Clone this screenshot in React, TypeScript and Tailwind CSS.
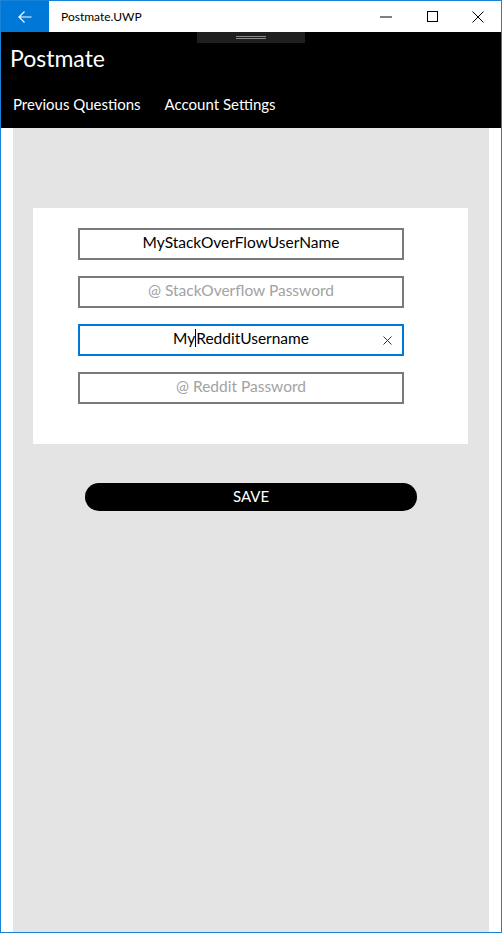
import React from "react";

const font = { fontFamily: '"Segoe UI", Lato, "Noto Sans", sans-serif' };

function TitleBar() {
  return (
    <div className="flex h-[31px] items-stretch bg-white">
      <div className="flex w-[48px] items-center justify-center bg-[#0078d7]">
        <svg width="14" height="12" viewBox="0 0 14 12" fill="none" stroke="white" strokeWidth="1.2">
          <path d="M13.5 6H1M6.5 0.5L1 6l5.5 5.5" />
        </svg>
      </div>
      <div className="flex flex-1 items-center pl-[12px] text-[12px] text-black">Postmate.UWP</div>
      <div className="flex w-[46px] items-center justify-center">
        <svg width="12" height="2" viewBox="0 0 12 2">
          <path d="M0 1h12" stroke="black" strokeWidth="1" />
        </svg>
      </div>
      <div className="flex w-[46px] items-center justify-center">
        <svg width="11" height="11" viewBox="0 0 11 11" fill="none">
          <rect x="0.5" y="0.5" width="10" height="10" stroke="black" strokeWidth="1" />
        </svg>
      </div>
      <div className="flex w-[46px] items-center justify-center">
        <svg width="12" height="12" viewBox="0 0 12 12" fill="none" stroke="black" strokeWidth="1">
          <path d="M0.5 0.5l11 11M11.5 0.5l-11 11" />
        </svg>
      </div>
    </div>
  );
}

function Header() {
  return (
    <header className="relative flex h-[96px] flex-col bg-black text-white">
      <div className="absolute left-[196px] top-0 flex h-[11px] w-[108px] flex-col items-center justify-center gap-[1px] bg-[#1f1f1f]">
        <div className="h-px w-[30px] bg-[#8a8a8a]" />
        <div className="h-px w-[30px] bg-[#8a8a8a]" />
      </div>
      <h1 className="pl-[9px] pt-[10px] text-[23px] leading-[32px] font-normal">Postmate</h1>
      <nav className="flex gap-[24px] pl-[12px] pt-[20px] text-[15px] leading-[20px]">
        <span>Previous Questions</span>
        <span>Account Settings</span>
      </nav>
    </header>
  );
}

interface FieldProps {
  value?: string;
  placeholder?: string;
  focused?: boolean;
}

function Field({ value, placeholder, focused }: FieldProps) {
  return (
    <div
      className={
        focused
          ? "relative flex h-[32px] w-[326px] items-center justify-center border-2 border-[#0078d7] bg-white pb-[2px] text-[15.5px]"
          : "relative flex h-[32px] w-[326px] items-center justify-center border-2 border-[#7a7a7a] bg-white pb-[2px] text-[15.5px]"
      }
    >
      {value ? (
        focused ? (
          <span className="text-black">
            My
            <span className="inline-block h-[18px] w-px bg-black align-[-3px]" />
            RedditUsername
          </span>
        ) : (
          <span className="text-black">{value}</span>
        )
      ) : (
        <span className="text-[#a2a2a2]">{placeholder}</span>
      )}
      {focused && (
        <svg
          className="absolute right-[10px] top-[10px]"
          width="9"
          height="9"
          viewBox="0 0 9 9"
          fill="none"
          stroke="#333"
          strokeWidth="1"
        >
          <path d="M0.5 0.5l8 8M8.5 0.5l-8 8" />
        </svg>
      )}
    </div>
  );
}

export default function App() {
  return (
    <div
      className="flex h-[933px] w-[502px] flex-col border border-[#1883d7] bg-white"
      style={font}
    >
      <TitleBar />
      <Header />
      <main className="flex flex-1 px-[12px]">
        <div className="flex flex-1 flex-col bg-[#e4e4e4] pt-[80px]">
          <section className="ml-[20px] mr-[21px] flex flex-col gap-[16px] bg-white pb-[40px] pl-[45px] pt-[20px]">
            <Field value="MyStackOverFlowUserName" />
            <Field placeholder="@ StackOverflow Password" />
            <Field value="MyRedditUsername" focused />
            <Field placeholder="@ Reddit Password" />
          </section>
          <button className="ml-[72px] mt-[39px] flex h-[28px] w-[332px] items-center justify-center rounded-full bg-black pb-[2px] text-[15px] text-white">
            SAVE
          </button>
        </div>
      </main>
    </div>
  );
}
